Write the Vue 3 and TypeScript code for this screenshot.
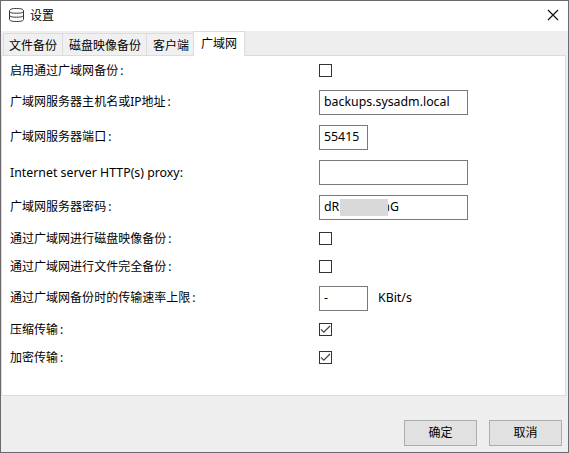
<script setup lang="ts">
import { ref } from 'vue'

interface Field {
  label: string
  kind: 'check' | 'text' | 'number' | 'masked'
  value?: string
  tail?: string
  checked?: boolean
  unit?: string
  latin?: boolean
}

const tabs = ['文件备份', '磁盘映像备份', '客户端', '广域网']
const active = ref(3)

const fields = ref<Field[]>([
  { label: '启用通过广域网备份', kind: 'check', checked: false },
  { label: '广域网服务器主机名或IP地址', kind: 'text', value: 'backups.sysadm.local' },
  { label: '广域网服务器端口', kind: 'number', value: '55415' },
  { label: 'Internet server HTTP(s) proxy', kind: 'text', value: '', latin: true },
  { label: '广域网服务器密码', kind: 'masked', value: 'dR', tail: 'nG' },
  { label: '通过广域网进行磁盘映像备份', kind: 'check', checked: false },
  { label: '通过广域网进行文件完全备份', kind: 'check', checked: false },
  { label: '通过广域网备份时的传输速率上限', kind: 'number', value: '-', unit: 'KBit/s' },
  { label: '压缩传输', kind: 'check', checked: true },
  { label: '加密传输', kind: 'check', checked: true },
])
</script>

<template>
  <div class="window">
    <header class="titlebar">
      <svg class="disk" width="18" height="16" viewBox="0 0 18 16" fill="none" stroke="#333" stroke-width="1">
        <path d="M.5 4C.5 2.300 2.500 1.500 7.500 1.500s7 .8 7 2.500-2 2.200-7 2.200S.5 5.700.5 4v8.200c0 1.600 2 2.300 7 2.300s7-.7 7-2.300V4M.5 8c0 1.500 2 2.200 7 2.200s7-.7 7-2.200" />
      </svg>
      <span class="title">设置</span>
      <svg class="close" width="12" height="12" viewBox="0 0 12 12" stroke="#111" stroke-width="1.15">
        <path d="M1 1l10 10M11 1L1 11" />
      </svg>
    </header>
    <nav class="tabs">
      <div v-for="(tab, i) in tabs" :key="tab" class="tab" :class="{ active: i === active }" @click="active = i">{{ tab }}</div>
    </nav>
    <main class="panel">
      <div v-for="field in fields" :key="field.label" class="row" :class="field.kind">
        <span class="label" :class="{ latin: field.latin }">{{ field.label }}<span class="colon">:</span></span>
        <div v-if="field.kind === 'check'" class="checkbox" @click="field.checked = !field.checked">
          <svg v-if="field.checked" width="11" height="11" viewBox="0 0 11 11" fill="none" stroke="#444" stroke-width="1.2">
            <path d="M1 5.3l2.8 2.8L10 2" />
          </svg>
        </div>
        <div v-else class="input"><span>{{ field.value }}</span><i v-if="field.kind === 'masked'" class="mask"></i><span v-if="field.tail" class="tail">{{ field.tail }}</span></div>
        <span v-if="field.unit" class="unit">{{ field.unit }}</span>
      </div>
    </main>
    <footer class="actions">
      <div class="button">确定</div>
      <div class="button">取消</div>
    </footer>
  </div>
</template>

<style>
body {
  margin: 0;
}
</style>

<style scoped>
.window {
  box-sizing: border-box;
  width: 569px;
  height: 453px;
  display: flex;
  flex-direction: column;
  border: 1px solid #6b696b;
  background: #eee;
  color: #000;
  font: 12px/16px "Noto Sans", "Noto Sans CJK SC", sans-serif;
  white-space: nowrap;
}
.titlebar {
  height: 30px;
  flex: none;
  box-sizing: border-box;
  display: flex;
  align-items: center;
  padding: 0 9px 2px 8px;
  background: #fff;
}
.title {
  margin-left: 3px;
  padding-top: 2px;
  flex: 1;
}
.tabs {
  height: 24px;
  flex: none;
  display: flex;
  align-items: flex-end;
  padding-left: 2px;
}
.tab {
  box-sizing: border-box;
  height: 22px;
  width: 59px;
  padding: 4px 0 0 5px;
  border: 1px solid #dcdcdc;
  border-bottom: 0;
  border-right: 0;
  background: #f0f0f0;
}
.tab:nth-child(2) {
  width: 84px;
  padding-left: 6px;
}
.tab:nth-child(3) {
  width: 47px;
  padding-left: 6px;
}
.tab.active {
  width: 52px;
  height: 25px;
  margin-bottom: -1px;
  padding-left: 7px;
  border-right: 1px solid #dcdcdc;
  background: #fff;
  z-index: 1;
}
.panel {
  box-sizing: border-box;
  height: 341px;
  flex: none;
  margin-right: 2px;
  padding: 6px 0 0 8px;
  border: 1px solid #dcdcdc;
  background: #fff;
  display: flex;
  flex-direction: column;
  gap: 10px;
}
.row {
  height: 25px;
  flex: none;
  display: grid;
  grid-template-columns: 309px auto 1fr;
  align-items: center;
}
.row.check {
  height: 18px;
}
.label {
  margin-top: -1px;
  letter-spacing: 0.02px;
}
.colon {
  margin-left: 2px;
}
.latin .colon {
  margin-left: 0;
}
.check .label {
  margin-top: 0;
}
.label.latin {
  margin-top: 0;
  font-size: 12.3px;
}
.checkbox {
  box-sizing: border-box;
  width: 13px;
  height: 13px;
  align-self: start;
  margin-top: 2px;
  border: 1px solid #333;
}
.checkbox svg {
  display: block;
}
.input {
  box-sizing: border-box;
  width: 149px;
  height: 25px;
  display: flex;
  align-items: center;
  padding: 0 0 2px 4px;
  border: 1px solid #7a7a7a;
  font-size: 12.35px;
}
.number .input {
  width: 49px;
}
.mask {
  width: 48px;
  height: 17px;
  margin: 2px -6px 0 1px;
  background: #d9d9d9;
  z-index: 1;
}
.unit {
  margin-left: 10px;
  margin-top: -1px;
  font-size: 12.35px;
}
.actions {
  flex: 1;
  display: flex;
  justify-content: flex-end;
  gap: 12px;
  padding: 24px 6px 0 0;
}
.button {
  box-sizing: border-box;
  width: 73px;
  height: 26px;
  padding-top: 4px;
  text-align: center;
  border: 1px solid #adadad;
  background: #e1e1e1;
}
</style>
